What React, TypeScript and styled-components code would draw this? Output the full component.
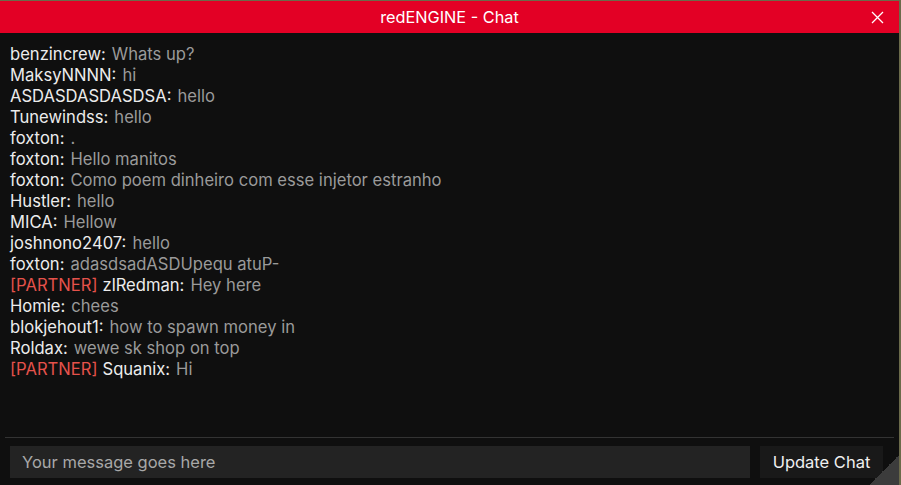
import styled, { createGlobalStyle } from 'styled-components'

const GlobalStyle = createGlobalStyle`
	html, body {
		margin: 0;
		padding: 0;
		background: #6b6a4a;
	}
	* {
		box-sizing: border-box;
	}
`

type Message = {
	name: string
	text: string
	partner?: boolean
}

const messages: Message[] = [
	{ name: 'benzincrew', text: 'Whats up?' },
	{ name: 'MaksyNNNN', text: 'hi' },
	{ name: 'ASDASDASDASDSA', text: 'hello' },
	{ name: 'Tunewindss', text: 'hello' },
	{ name: 'foxton', text: '.' },
	{ name: 'foxton', text: 'Hello manitos' },
	{ name: 'foxton', text: 'Como poem dinheiro com esse injetor estranho' },
	{ name: 'Hustler', text: 'hello' },
	{ name: 'MICA', text: 'Hellow' },
	{ name: 'joshnono2407', text: 'hello' },
	{ name: 'foxton', text: 'adasdsadASDUpequ atuP-' },
	{ name: 'zlRedman', text: 'Hey here', partner: true },
	{ name: 'Homie', text: 'chees' },
	{ name: 'blokjehout1', text: 'how to spawn money in' },
	{ name: 'Roldax', text: 'wewe sk shop on top' },
	{ name: 'Squanix', text: 'Hi', partner: true },
]

const App: React.FC = () => {
	return (
		<>
			<GlobalStyle />
			<Window>
				<TitleBar>
					<Title>redENGINE - Chat</Title>
					<Close>
						<svg width="13" height="13" viewBox="0 0 13 13">
							<path d="M1 1 L12 12 M12 1 L1 12" stroke="#fff" strokeWidth="1.3" />
						</svg>
					</Close>
				</TitleBar>
				<Body>
					<Feed>
						{messages.map((m, i) => (
							<Line key={i}>
								{m.partner && <Tag>[PARTNER]</Tag>}
								<Name>{m.name}:</Name>
								<Text>{m.text}</Text>
							</Line>
						))}
					</Feed>
					<Divider />
					<Composer>
						<Input placeholder="Your message goes here" />
						<Button>Update Chat</Button>
					</Composer>
					<Grip />
				</Body>
			</Window>
		</>
	)
}

export default App

const Window = styled.div`
	width: 899px;
	height: 484px;
	margin-top: 1px;
	display: flex;
	flex-direction: column;
	font-family: Inter, 'Noto Sans', sans-serif;
	background: #0f0f0f;
`
const TitleBar = styled.div`
	position: relative;
	height: 32px;
	flex: none;
	background: #e30025;
	display: flex;
	align-items: center;
	justify-content: center;
`
const Title = styled.span`
	color: #fff;
	font-size: 16.3px;
`
const Close = styled.div`
	position: absolute;
	right: 15px;
	top: 10px;
	display: flex;
`
const Body = styled.div`
	position: relative;
	flex: 1;
	display: flex;
	flex-direction: column;
	min-height: 0;
`
const Feed = styled.div`
	flex: 1;
	padding: 11px 10px 0;
	overflow: hidden;
`
const Line = styled.div`
	display: flex;
	gap: 6px;
	font-size: 16.6px;
	line-height: 21px;
	white-space: nowrap;
`
const Tag = styled.span`
	color: #e5524b;
	margin-right: -1px;
`
const Name = styled.span`
	color: #ececec;
`
const Text = styled.span`
	color: #9a9a9a;
`
const Divider = styled.div`
	height: 1px;
	margin: 0 5px 0 5px;
	background: #333;
`
const Composer = styled.div`
	display: flex;
	gap: 10px;
	padding: 8px 16px 7px 10px;
`
const Input = styled.input`
	width: 740px;
	height: 32px;
	border: none;
	outline: none;
	background: #232323;
	color: #ddd;
	font-family: Inter, 'Noto Sans', sans-serif;
	font-size: 16.5px;
	padding: 0 12px;

	&::placeholder {
		color: #a8a8a8;
	}
`
const Button = styled.button`
	width: 123px;
	height: 32px;
	border: none;
	background: #191919;
	color: #f0f0f0;
	font-family: Inter, 'Noto Sans', sans-serif;
	font-size: 16.5px;
	padding: 0;
`
const Grip = styled.div`
	position: absolute;
	right: 0;
	bottom: 0;
	width: 30px;
	height: 30px;
	background: linear-gradient(135deg, transparent 50%, #3c3c3c 50%);
`
